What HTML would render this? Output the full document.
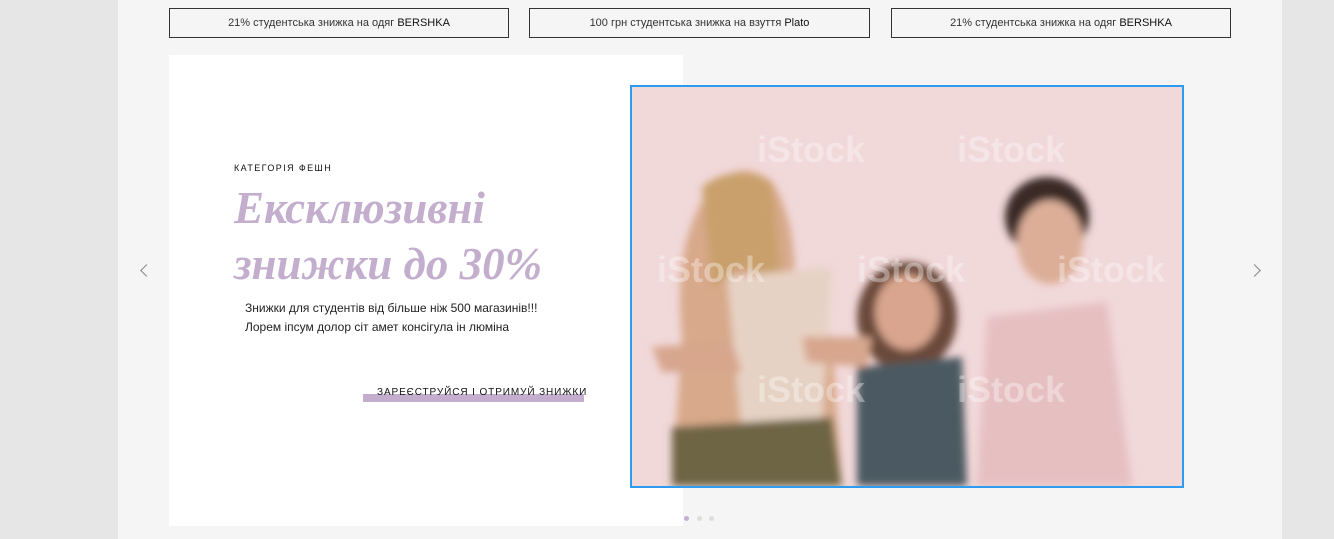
<!DOCTYPE html>
<html><head><meta charset="utf-8"><style>
*{margin:0;padding:0;box-sizing:border-box}
body{width:1334px;height:539px;background:#e6e6e6;font-family:"Liberation Sans",sans-serif;position:relative;overflow:hidden}
.main{position:absolute;left:118px;top:0;width:1164px;height:539px;background:#f5f5f5}
.tab{position:absolute;top:8px;height:30px;border:1px solid #333;background:#f5f5f5;font-size:11px;color:#333;text-align:center;line-height:28px}
.tab b{font-weight:normal;color:#111}
.card{position:absolute;left:169px;top:55px;width:514px;height:471px;background:#fff}
.cat{position:absolute;left:234px;top:163px;font-size:9px;letter-spacing:1.4px;color:#111;white-space:nowrap}
.title{position:absolute;left:234px;top:180px;font-family:"Liberation Serif",serif;font-style:italic;font-weight:bold;font-size:45px;line-height:56px;color:#c3aecd;letter-spacing:0;white-space:nowrap}
.desc{position:absolute;left:245px;top:299px;font-size:12px;line-height:19px;color:#222;white-space:nowrap}
.cta{position:absolute;left:363px;top:386px;width:221px;height:16px}
.cta .bar{position:absolute;left:0;top:8px;width:221px;height:8px;background:#c3aecd}
.cta span{position:absolute;left:14px;top:1px;font-size:10px;letter-spacing:0.9px;color:#111;white-space:nowrap}
.photo{position:absolute;left:630px;top:85px;width:554px;height:403px;border:2px solid #2d9cf0;background:#f0d6d8;overflow:hidden}
.arrow{position:absolute;top:266px;width:9px;height:9px;border-left:1.5px solid #888;border-bottom:1.5px solid #888}
.dot{position:absolute;top:516px;width:5px;height:5px;border-radius:50%;background:#ddd}
</style></head><body>
<div class="main"></div>
<div class="tab" style="left:169px;width:340px">21% студентська знижка на одяг <b>BERSHKA</b></div>
<div class="tab" style="left:529px;width:341px">100 грн студентська знижка на взуття <b>Plato</b></div>
<div class="tab" style="left:891px;width:340px">21% студентська знижка на одяг <b>BERSHKA</b></div>
<div class="card"></div>
<div class="cat">КАТЕГОРІЯ ФЕШН</div>
<div class="title">Ексклюзивні<br>знижки до 30%</div>
<div class="desc">Знижки для студентів від більше ніж 500 магазинів!!!<br>Лорем іпсум долор сіт амет консігула ін люміна</div>
<div class="cta"><div class="bar"></div><span>ЗАРЕЄСТРУЙСЯ І ОТРИМУЙ ЗНИЖКИ</span></div>
<div class="photo">
<svg width="550" height="399" viewBox="0 0 550 399">
<defs><filter id="b"><feGaussianBlur stdDeviation="4"/></filter></defs>
<rect width="550" height="399" fill="#f1d8d9"/>
<g filter="url(#b)">
<path d="M50 250 Q40 150 80 100 Q110 70 140 95 Q170 140 160 230 L200 250 L210 399 L40 399 Z" fill="#d8a98a"/>
<path d="M70 100 Q100 75 140 95 L150 200 L110 180 L80 200 Z" fill="#c9a06c"/>
<path d="M95 190 L200 180 L190 340 L110 350 Z" fill="#e6d2c4"/>
<path d="M40 340 L200 330 L210 399 L40 399 Z" fill="#6e6545"/>
<ellipse cx="275" cy="230" rx="50" ry="55" fill="#6a4a3a"/>
<ellipse cx="275" cy="225" rx="32" ry="38" fill="#d9a58e"/>
<path d="M225 280 L330 270 L335 399 L225 399 Z" fill="#4c5a62"/>
<ellipse cx="415" cy="130" rx="42" ry="40" fill="#3a2a28"/>
<ellipse cx="418" cy="155" rx="33" ry="42" fill="#dcae98"/>
<path d="M355 230 L475 215 L500 399 L345 399 Z" fill="#e6bfc1"/>
<path d="M20 260 L100 255 L110 285 L30 285 Z" fill="#d7a68d"/>
<path d="M170 250 L240 250 L235 280 L175 275 Z" fill="#d7a68d"/>
</g>
<g fill="#fff" opacity="0.35" font-family="Liberation Sans" font-weight="bold" font-size="36">
<text x="125" y="75">iStock</text><text x="325" y="75">iStock</text><text x="25" y="195">iStock</text><text x="225" y="195">iStock</text><text x="425" y="195">iStock</text><text x="125" y="315">iStock</text><text x="325" y="315">iStock</text>
</g>
</svg>
</div>
<div class="arrow" style="left:142px;transform:rotate(45deg)"></div>
<div class="arrow" style="left:1250px;transform:rotate(-135deg)"></div>
<div class="dot" style="left:684px;background:#c3aecd"></div>
<div class="dot" style="left:697px"></div>
<div class="dot" style="left:709px"></div>
</body></html>
